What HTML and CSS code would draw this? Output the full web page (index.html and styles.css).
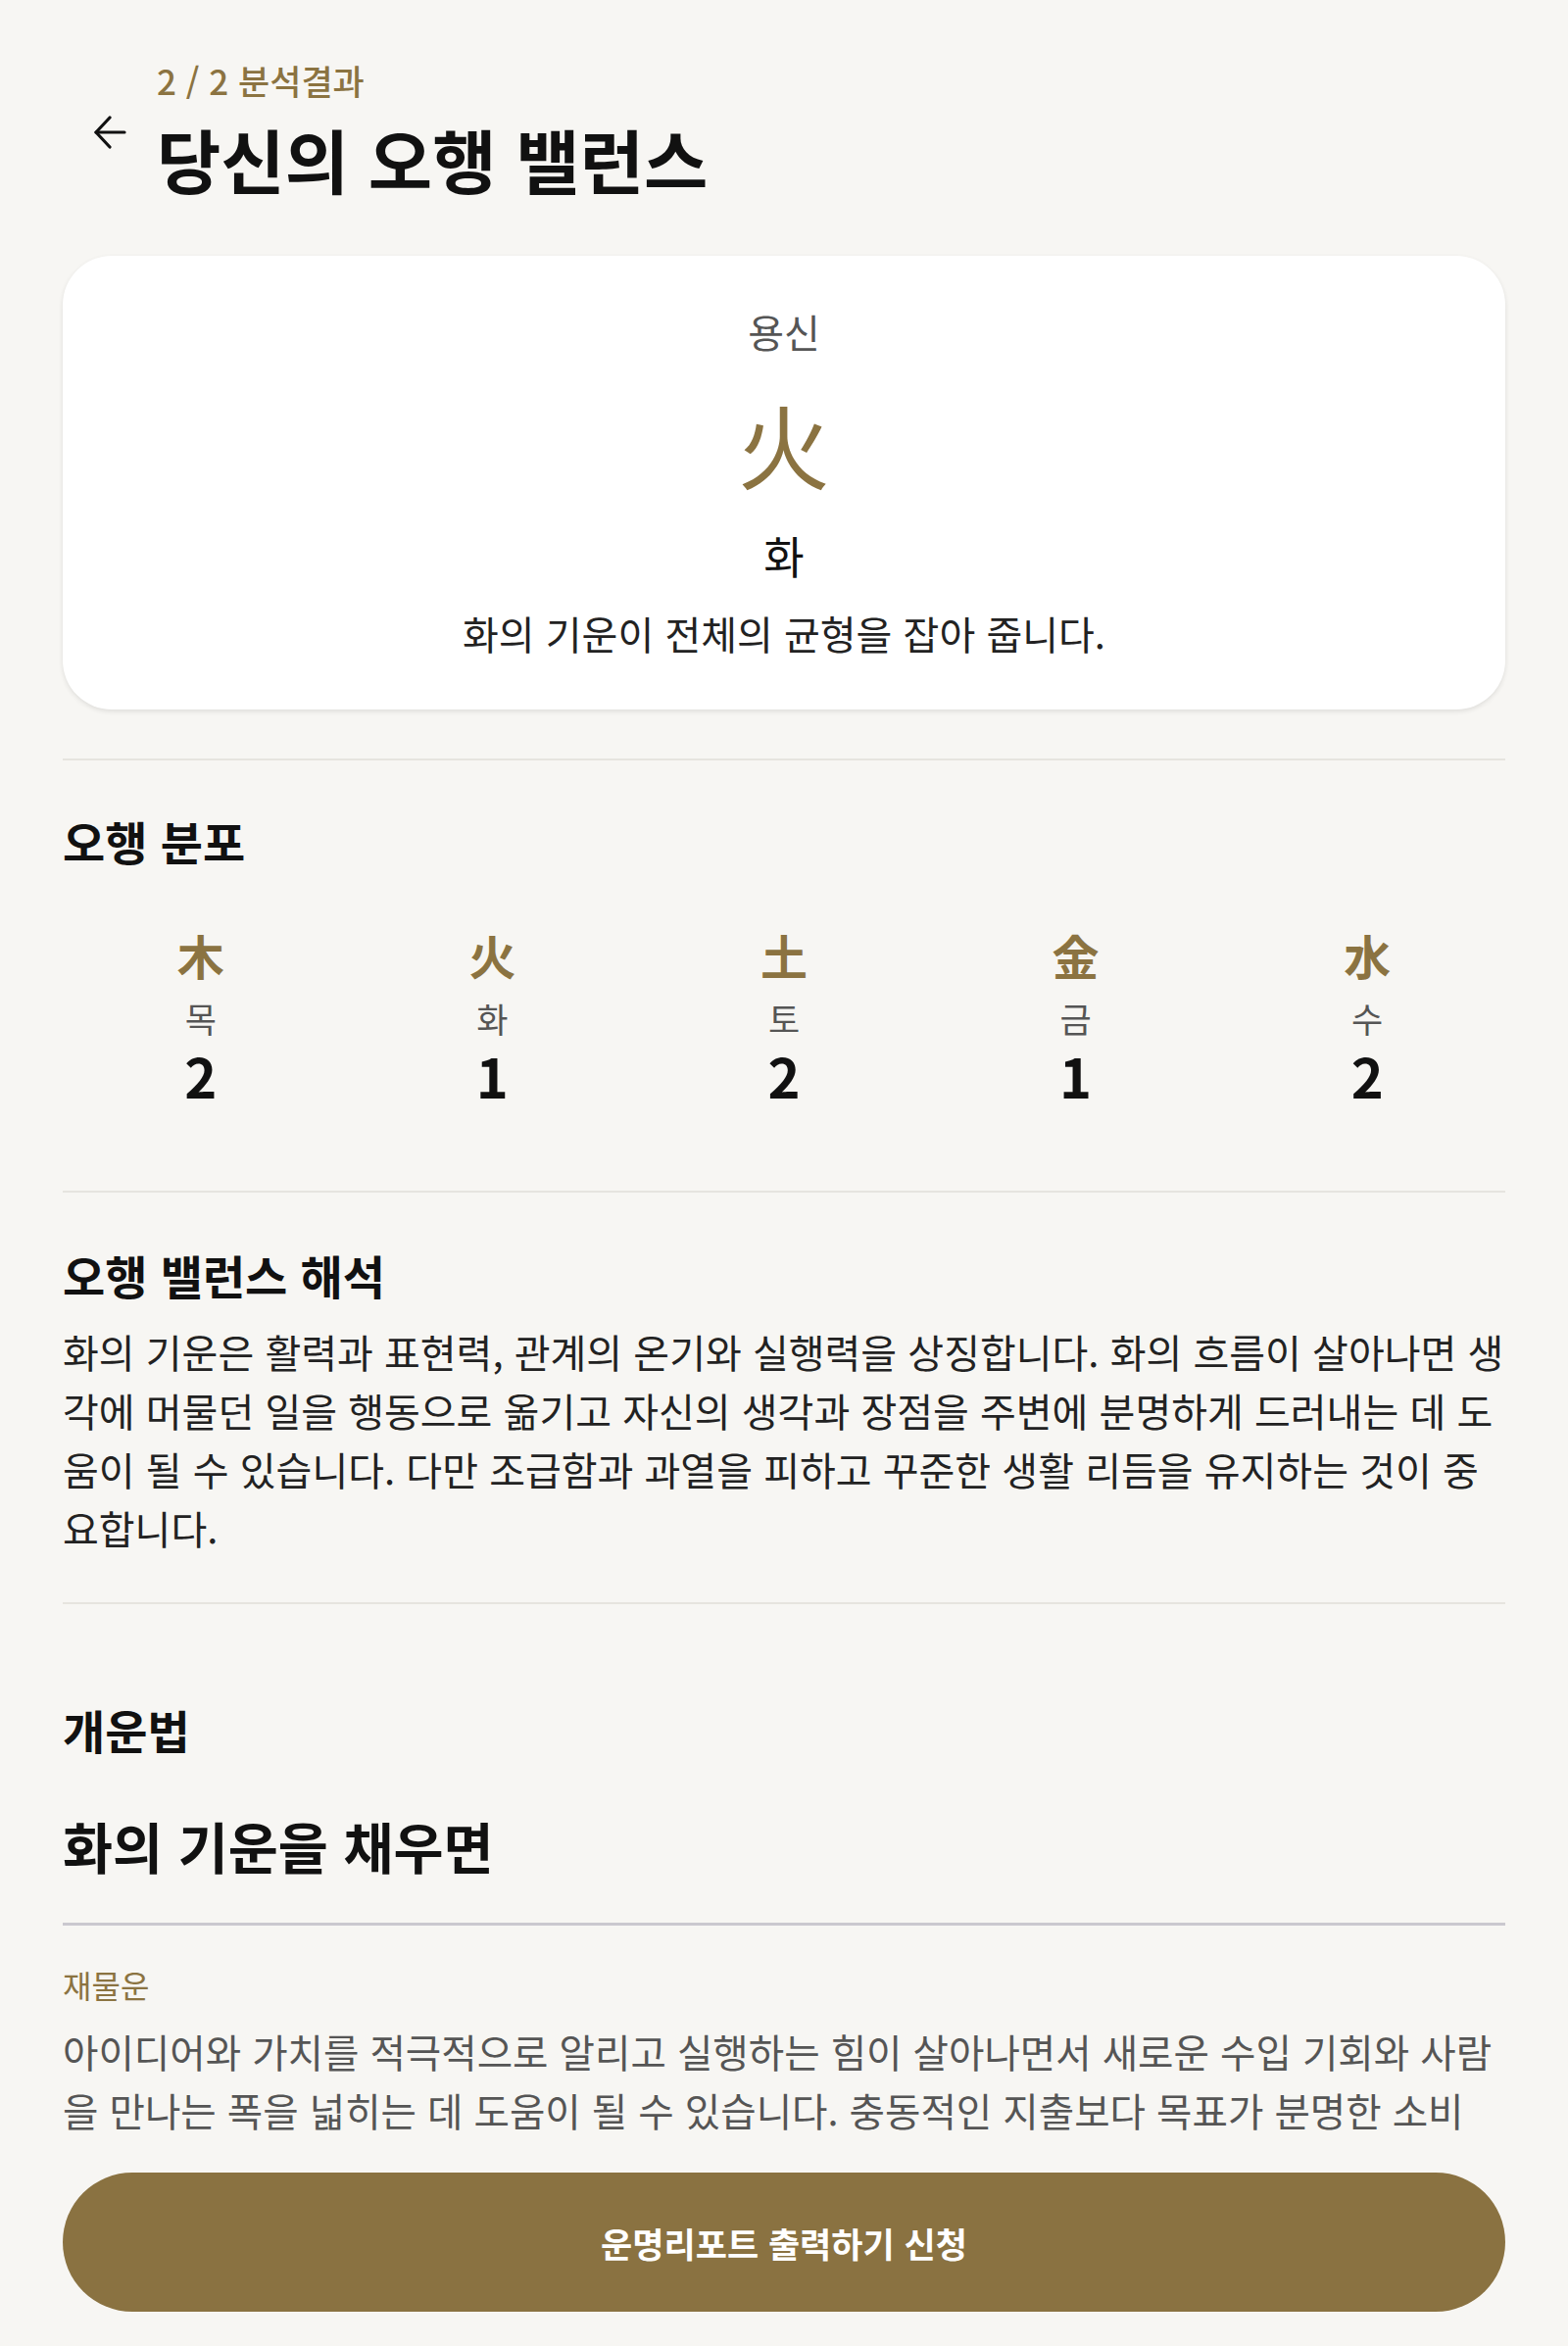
FILE: index.html
```html
<!DOCTYPE html>
<html lang="ko">
<head>
    <meta charset="UTF-8">
    <meta name="viewport" content="width=device-width, initial-scale=1.0">
    <title>오행 밸런스</title>
    <link rel="stylesheet" href="styles.css">
</head>
<body>

    <div class="header">
        <a class="back" href="#">
            <svg width="34" height="34" viewBox="0 0 34 34" fill="none" stroke="#111" stroke-width="3.2" stroke-linecap="round" stroke-linejoin="round">
                <path d="M32 17H3"/>
                <path d="M17 2L3 17L17 32"/>
            </svg>
        </a>
        <div class="head-txt">
            <div class="step">2 / 2 분석결과</div>
            <h1>당신의 오행 밸런스</h1>
        </div>
    </div>

    <div class="main">

        <div class="card">
            <div class="card-label">용신</div>
            <div class="card-han">火</div>
            <div class="card-name">화</div>
            <div class="card-desc">화의 기운이 전체의 균형을 잡아 줍니다.</div>
        </div>

        <div class="line"></div>

        <h2 class="sec-title t-dist">오행 분포</h2>
        <div class="elements">
            <div class="el">
                <div class="el-han">木</div>
                <div class="el-name">목</div>
                <div class="el-num">2</div>
            </div>
            <div class="el">
                <div class="el-han">火</div>
                <div class="el-name">화</div>
                <div class="el-num">1</div>
            </div>
            <div class="el">
                <div class="el-han">土</div>
                <div class="el-name">토</div>
                <div class="el-num">2</div>
            </div>
            <div class="el">
                <div class="el-han">金</div>
                <div class="el-name">금</div>
                <div class="el-num">1</div>
            </div>
            <div class="el">
                <div class="el-han">水</div>
                <div class="el-name">수</div>
                <div class="el-num">2</div>
            </div>
        </div>

        <div class="line line-b"></div>

        <h2 class="sec-title t-read">오행 밸런스 해석</h2>
        <p class="read">화의 기운은 활력과 표현력, 관계의 온기와 실행력을 상징합니다. 화의 흐름이 살아나면 생각에 머물던 일을 행동으로 옮기고 자신의 생각과 장점을 주변에 분명하게 드러내는 데 도움이 될 수 있습니다. 다만 조급함과 과열을 피하고 꾸준한 생활 리듬을 유지하는 것이 중요합니다.</p>

        <div class="line line-c"></div>

        <h2 class="sec-title t-luck">개운법</h2>
        <h3 class="luck-head">화의 기운을 채우면</h3>
        <div class="line-dark"></div>

        <div class="tip">
            <div class="tip-name">재물운</div>
            <p class="tip-txt">아이디어와 가치를 적극적으로 알리고 실행하는 힘이 살아나면서 새로운 수입 기회와 사람을 만나는 폭을 넓히는 데 도움이 될 수 있습니다. 충동적인 지출보다 목표가 분명한 소비</p>
        </div>
    </div>

    <div class="bottom">
        <button class="btn">운명리포트 출력하기 신청</button>
    </div>

</body>
</html>
```

FILE: styles.css
```css
*{
    margin: 0;
    padding: 0;
    box-sizing: border-box;
}
body{
    background: #f7f6f3;
    font-family: "Noto Sans CJK KR", "Noto Sans", sans-serif;
    color: #111;
}
.header{
    display: flex;
    padding: 62px 64px 0 95px;
}
.back{
    display: block;
    width: 34px;
    height: 34px;
    margin-top: 56px;
    margin-right: 31px;
}
.back svg{
    display: block;
}
.step{
    font-size: 35px;
    line-height: 40px;
    color: #8b7341;
    font-weight: 500;
}
h1{
    margin-top: 14px;
    font-size: 71px;
    line-height: 90px;
    font-weight: 700;
}
.main{
    padding: 0 64px;
}
.card{
    margin-top: 55px;
    background: #fff;
    border-radius: 50px;
    box-shadow: 0 2px 5px rgba(0,0,0,0.10);
    padding: 52px 20px 53px;
    text-align: center;
}
.card-label{
    font-size: 40px;
    line-height: 50px;
    color: #555;
}
.card-han{
    margin-top: 34px;
    font-size: 94px;
    line-height: 110px;
    color: #8b7341;
    font-weight: 400;
}
.card-name{
    margin-top: 32px;
    font-size: 45px;
    line-height: 56px;
}
.card-desc{
    margin-top: 26px;
    font-size: 40px;
    line-height: 50px;
    color: #222;
}
.line{
    height: 2px;
    background: #e6e4df;
    margin-top: 50px;
}
.sec-title{
    font-size: 47px;
    line-height: 60px;
    font-weight: 700;
}
.t-dist{
    margin-top: 52px;
}
.elements{
    display: grid;
    grid-template-columns: repeat(5, 1fr);
    margin: 56px -8px 0;
    text-align: center;
}
.el-han{
    font-size: 48px;
    line-height: 60px;
    font-weight: 700;
    color: #8b7341;
}
.el-name{
    margin-top: 12px;
    font-size: 35px;
    line-height: 46px;
    color: #555;
}
.el-num{
    margin-top: 3px;
    font-size: 56px;
    line-height: 64px;
    font-weight: 700;
}
.line-b{
    margin-top: 86px;
}
.t-read{
    margin-top: 54px;
}
.read{
    margin-top: 18px;
    font-size: 40px;
    line-height: 60px;
    color: #222;
}
.line-c{
    margin-top: 46px;
}
.t-luck{
    margin-top: 98px;
}
.luck-head{
    margin-top: 53px;
    font-size: 55.5px;
    line-height: 70px;
    font-weight: 700;
}
.line-dark{
    height: 3px;
    background: #cac8cf;
    margin-top: 44px;
}
.tip-name{
    margin-top: 40px;
    font-size: 32px;
    line-height: 40px;
    color: #8b7341;
}
.tip-txt{
    margin-top: 18px;
    font-size: 39.6px;
    line-height: 60px;
    color: #555;
}
.bottom{
    position: fixed;
    left: 0;
    right: 0;
    bottom: 0;
    padding: 30px 64px 35px;
    background: #f7f6f3;
}
.btn{
    display: block;
    width: 100%;
    height: 142px;
    border: none;
    border-radius: 71px;
    background: #8a7241;
    color: #fff;
    font-family: "Noto Sans CJK KR", "Noto Sans", sans-serif;
    font-size: 35px;
    font-weight: 700;
}
```
